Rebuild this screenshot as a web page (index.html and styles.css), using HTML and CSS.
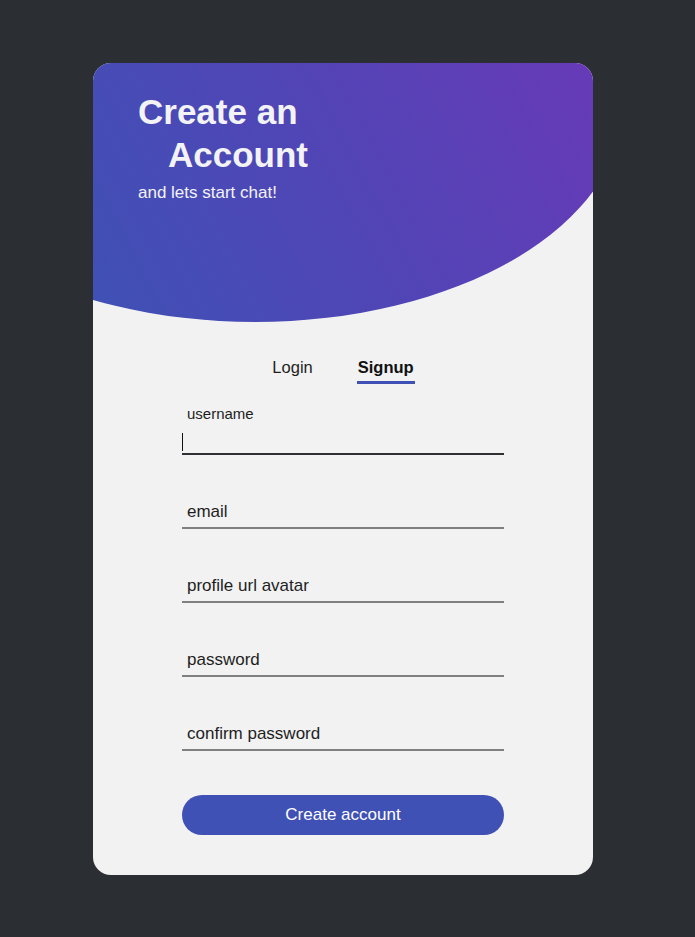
FILE: index.html
```html
<!DOCTYPE html>
<html lang="en">
<head>
<meta charset="utf-8">
<title>Create an Account</title>
<link rel="stylesheet" href="styles.css">
</head>
<body>
  <main class="card">
    <header class="hero">
      <h1 class="hero-title">Create an<span class="hero-indent">Account</span></h1>
      <p class="hero-sub">and lets start chat!</p>
    </header>

    <nav class="tabs">
      <a class="tab">Login</a>
      <a class="tab tab-active">Signup</a>
    </nav>

    <form class="form">
      <div class="field field-focused">
        <label class="field-label" for="username">username</label>
        <input class="field-input" id="username" type="text">
        <span class="caret"></span>
      </div>
      <div class="field">
        <input class="field-input" type="email" placeholder="email">
      </div>
      <div class="field">
        <input class="field-input" type="text" placeholder="profile url avatar">
      </div>
      <div class="field">
        <input class="field-input" type="password" placeholder="password">
      </div>
      <div class="field">
        <input class="field-input" type="password" placeholder="confirm password">
      </div>
      <button class="submit" type="button">Create account</button>
    </form>
  </main>
</body>
</html>
```
FILE: styles.css
```css
* { box-sizing: border-box; }

html, body {
  margin: 0;
  background: #2b2e33;
}

body {
  padding: 63px 0 0 93px;
  font-family: "Liberation Sans", Arial, sans-serif;
  min-height: 937px;
}

.card {
  width: 500px;
  height: 812px;
  background: #f2f2f2;
  border-radius: 18px;
  overflow: hidden;
  display: flex;
  flex-direction: column;
}

.hero {
  height: 260px;
  padding: 27px 0 0 45px;
  background: linear-gradient(62deg, #3f51b5 0%, #5145b6 50%, #673ab7 100%);
  clip-path: ellipse(368px 216px at 162px 43px);
  color: #f3f3f5;
}

.hero-title {
  margin: 0;
  font-size: 35px;
  line-height: 43px;
  font-weight: 700;
}

.hero-indent {
  display: block;
  padding-left: 30px;
}

.hero-sub {
  margin: 7px 0 0;
  font-size: 17px;
  line-height: 20px;
}

.tabs {
  margin-top: 34px;
  display: flex;
  justify-content: center;
  gap: 43px;
}

.tab {
  padding: 0 1px 4px;
  font-size: 16.5px;
  line-height: 20px;
  color: #1e1e1e;
  border-bottom: 3px solid transparent;
}

.tab-active {
  font-weight: 700;
  color: #111;
  border-bottom-color: #3f51b5;
}

.form {
  margin: 37px auto 0;
  width: 322px;
  display: flex;
  flex-direction: column;
}

.field {
  position: relative;
  height: 34px;
  margin-bottom: 40px;
}

.field-input {
  display: block;
  width: 100%;
  height: 34px;
  margin: 0;
  padding: 2px 5px 0;
  border: 0;
  border-bottom: 2px solid #808080;
  background: transparent;
  font-family: "Liberation Sans", Arial, sans-serif;
  font-size: 17px;
  color: #1e1e1e;
  outline: none;
}

.field-input::placeholder {
  color: #1e1e1e;
  opacity: 1;
}

.field-focused .field-input {
  border-bottom-color: #2e3034;
}

.field-label {
  position: absolute;
  left: 5px;
  top: -16px;
  font-size: 15px;
  line-height: 17px;
  color: #1e1e1e;
}

.caret {
  position: absolute;
  left: 0;
  bottom: 4px;
  width: 1px;
  height: 18px;
  background: #111;
}

.submit {
  margin-top: 4px;
  height: 40px;
  width: 100%;
  border: 0;
  border-radius: 20px;
  background: #3f51b5;
  color: #fff;
  font-family: "Liberation Sans", Arial, sans-serif;
  font-size: 17px;
}
```
